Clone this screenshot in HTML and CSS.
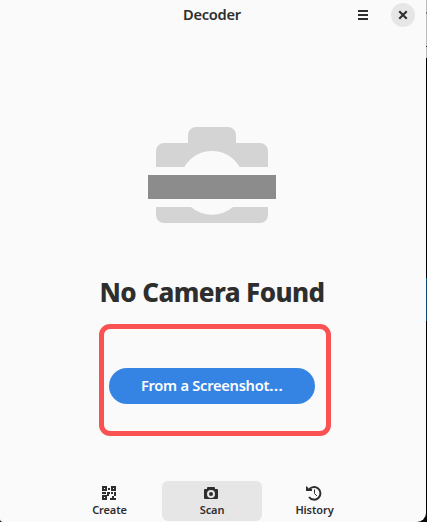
FILE: index.html
```html
<!DOCTYPE html>
<html lang="en">
<head>
<meta charset="utf-8">
<title>Decoder</title>
<link rel="stylesheet" href="styles.css">
</head>
<body>
<main class="window">
  <header class="header">
    <h1 class="title">Decoder</h1>
    <div class="controls">
      <button class="menu" aria-label="Menu"><svg width="12" height="12"><path d="M1 1h10v2H1zM1 5h10v2H1zM1 9h10v2H1z"/></svg></button>
      <button class="close" aria-label="Close"><svg width="10" height="10"><path d="M2 2l6 6M8 2l-6 6" fill="none" stroke="#2e2e2e" stroke-width="2.1" stroke-linecap="square"/></svg></button>
    </div>
  </header>
  <section class="status">
    <svg class="camera" width="128" height="96" viewBox="0 0 128 96">
      <path class="light" d="M8 40V24a8 8 0 0 1 8-8H40V8a8 8 0 0 1 8-8H80a8 8 0 0 1 8 8V16H112a8 8 0 0 1 8 8V40H91.7A32 32 0 0 0 36.3 40ZM8 80H43A32 32 0 0 0 85 80H120V88a8 8 0 0 1-8 8H16a8 8 0 0 1-8-8Z"/>
      <path class="bar" d="M0 48h128v24H0z"/>
    </svg>
    <h2 class="heading">No Camera Found</h2>
    <div class="highlight"><button class="action"><span>From a Screenshot<span class="dots">…</span></span></button></div>
  </section>
  <nav class="tabs">
    <button class="tab create">
      <svg width="16" height="16"><path fill-rule="evenodd" d="M1 1h5v5H1zM3 3v1h1V3zM10 1h5v5h-5zM12 3v1h1V3zM1 10h5v5H1zM3 12v1h1v-1zM7 3h2v2H7zM1 7h4v2H1zM6 7h3v2H8v2H6zM10 7h2v2h-2zM13 7h2v4h-2v2h2v2H9v-2h2v-2h2z"/></svg>
      <span>Create</span>
    </button>
    <button class="tab scan">
      <svg width="16" height="16"><path fill-rule="evenodd" d="M2 4h2V3a1 1 0 0 1 1-1h6a1 1 0 0 1 1 1v1h2a1 1 0 0 1 1 1v8a1 1 0 0 1-1 1H2a1 1 0 0 1-1-1V5a1 1 0 0 1 1-1zM8 5a4 4 0 1 0 0 8a4 4 0 0 0 0-8zM8 7a2 2 0 1 1 0 4a2 2 0 0 1 0-4z"/></svg>
      <span>Scan</span>
    </button>
    <button class="tab history">
      <svg width="16" height="16"><path d="M0 1l2 1.5L3 4h3v2H0z"/><path d="M2.8 5A6.3 6.3 0 1 1 3 12" fill="none" stroke="#2e2e2e" stroke-width="2"/><path d="M8.5 4.5v4l2.4 2.4" fill="none" stroke="#2e2e2e"/></svg>
      <span>History</span>
    </button>
  </nav>
</main>
<aside class="desktop"></aside>
</body>
</html>
```
FILE: styles.css
```css
* { box-sizing: border-box; }
body {
  margin: 0;
  width: 427px;
  height: 522px;
  overflow: hidden;
  display: flex;
  background: #080b0d;
  color: #2e2e2e;
  font-family: "Noto Sans", sans-serif;
}
button {
  border: 0;
  padding: 0;
  margin: 0;
  background: none;
  color: inherit;
  font: inherit;
  display: flex;
  align-items: center;
  justify-content: center;
}
svg { display: block; fill: #2e2e2e; flex: none; }
.window {
  width: 426px;
  height: 522px;
  background: #fafafa;
  border-radius: 0 0 9px 3px;
  display: flex;
  flex-direction: column;
}
.desktop {
  width: 1px;
  height: 522px;
  background: linear-gradient(#bbb 0 12px, #777 12px 14px, #bbb 14px 46px, #333 46px 47px, #bbb 47px 58px, #000 58px 278px, #0b4b75 278px 321px, #000 321px);
}
.header {
  height: 30px;
  display: grid;
  grid-template-columns: 343px 72px;
}
.title {
  margin: 0;
  padding-left: 183px;
  font-size: 14.67px;
  line-height: 28px;
  letter-spacing: -0.27px;
  font-weight: 600;
  white-space: nowrap;
}
.controls {
  display: flex;
  align-items: center;
  justify-content: space-between;
  padding-left: 8px;
}
.menu, .close { width: 24px; height: 24px; }
.close { border-radius: 50%; background: #e6e6e6; }
.status {
  width: 424px;
  height: 451px;
  display: flex;
  flex-direction: column;
  align-items: center;
  padding-top: 97px;
}
.camera .light { fill: #d4d4d4; }
.camera .bar { fill: #8c8c8c; }
.heading {
  margin: 49px 0 0;
  height: 41px;
  font-size: 26px;
  line-height: 40px;
  letter-spacing: -0.6px;
  font-weight: 800;
  white-space: nowrap;
}
.highlight {
  width: 232px;
  height: 112px;
  margin: 11px 0 0 6px;
  border: 5px solid #fa5252;
  border-radius: 11px;
  display: flex;
  padding: 39px 0 0 5px;
}
.action {
  width: 206px;
  height: 36px;
  padding: 0 2px 2px 0;
  border-radius: 18px;
  background: #3584e4;
  color: #fff;
  font-size: 14.67px;
  letter-spacing: -0.27px;
  font-weight: 600;
  white-space: nowrap;
}
.dots {
  display: inline-block;
  transform: scaleX(1.15);
  transform-origin: left;
}
.tabs {
  display: grid;
  grid-template-columns: repeat(3, 100px);
  gap: 2.5px;
  padding-left: 59.5px;
}
.tab {
  height: 40px;
  flex-direction: column;
  justify-content: flex-start;
  padding-top: 4px;
  border-radius: 6px;
  font-size: 11px;
  line-height: 16px;
  letter-spacing: -0.1px;
  font-weight: 600;
}
.tab svg { margin-left: -1px; }
.scan svg { margin-left: -2px; }
.scan { background: #e6e6e6; }
.tab span { margin-top: 1px; }
```
